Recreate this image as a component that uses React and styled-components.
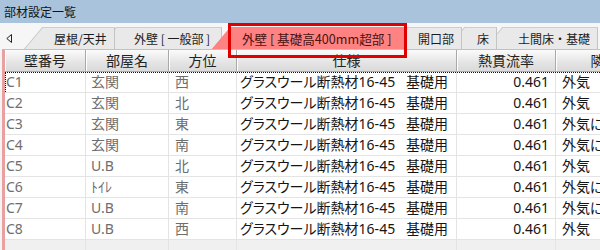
import React from "react";
import styled, { createGlobalStyle } from "styled-components";

const GlobalStyle = createGlobalStyle`
  html, body {
    margin: 0;
    padding: 0;
    background: #f4f4f4;
  }
  body {
    font-family: "Noto Sans", "Noto Sans CJK JP", sans-serif;
  }
`;

const Window = styled.div`
  width: 600px;
  height: 250px;
  overflow: hidden;
  background: #f4f4f4;
  display: flex;
  flex-direction: column;
`;

const TitleBar = styled.div`
  height: 23px;
  flex: none;
  background: #a9c3dd;
  color: #111;
  font-family: "Noto Sans CJK JP", sans-serif;
  font-size: 12px;
  line-height: 23px;
  padding-left: 4px;
`;

const TabStrip = styled.div`
  height: 26px;
  flex: none;
  display: flex;
  align-items: flex-end;
  background: #f6f6f6;
`;

const ScrollArrow = styled.div`
  width: 20px;
  height: 22px;
  display: flex;
  align-items: center;
  padding-left: 6px;
  box-sizing: border-box;
`;

const Tab = styled.div`
  position: relative;
  z-index: ${(p) => (p.$active ? 20 : 10 - p.$index)};
  box-sizing: border-box;
  width: ${(p) => p.$width}px;
  margin-left: ${(p) => p.$offset}px;
  padding-left: ${(p) => p.$pad}px;
  height: 22px;
  display: flex;
  align-items: center;
  white-space: nowrap;
  font-family: "Noto Sans CJK JP", sans-serif;
  font-size: ${(p) => (p.$active ? 12.6 : 12)}px;
  color: ${(p) => (p.$active ? "#4a1212" : "#1c1c1c")};
  background: ${(p) => (p.$active ? "#ff8282" : "#e9e9e9")};
  border-top: 1px solid ${(p) => (p.$active ? "#ff8282" : "#cdcdcd")};
  border-right: 1px solid ${(p) => (p.$active ? "#ff8282" : "#c4c4c4")};

  &::before {
    content: "";
    position: absolute;
    z-index: -1;
    top: -1px;
    bottom: 0;
    left: -19px;
    width: 30px;
    background: ${(p) => (p.$active ? "#ff8282" : "#e9e9e9")};
    border-top: 1px solid ${(p) => (p.$active ? "#ff8282" : "#cdcdcd")};
    border-left: 1px solid ${(p) => (p.$active ? "#ff8282" : "#c4c4c4")};
    transform: skewX(-40deg);
    transform-origin: bottom left;
  }

  ${(p) =>
    p.$active &&
    `
    &::after {
      content: "";
      position: absolute;
      top: -5px;
      bottom: -9px;
      left: -3px;
      right: -4px;
      border: 3px solid #e10000;
      pointer-events: none;
    }
  `}
`;

const Panel = styled.div`
  flex: 1;
  margin-left: 2px;
  border-left: 3px solid #e9a0a0;
  border-top: 1px solid #eab0b0;
  background: #ffffff;
  overflow: hidden;
`;

const COLS = "81px 83px 68px 220px 99px 126px";

const HeaderRow = styled.div`
  display: grid;
  grid-template-columns: ${COLS};
  height: 22px;
`;

const HeaderCell = styled.div`
  box-sizing: border-box;
  height: 22px;
  background: linear-gradient(#fbfbfb, #e4e4e4 60%, #dadada);
  border-right: 1px solid #a9a9a9;
  border-bottom: 1px solid #a9a9a9;
  box-shadow: inset 1px 0 0 #ffffff;
  text-align: center;
  font-family: "Noto Sans CJK JP", sans-serif;
  font-size: 14px;
  line-height: 21px;
  color: #222;
  white-space: nowrap;
  overflow: hidden;
`;

const Row = styled.div`
  position: relative;
  display: grid;
  grid-template-columns: ${COLS};
  height: 21px;
  background: ${(p) => (p.$empty ? "#f0f0f0" : "#ffffff")};

  ${(p) =>
    p.$focused &&
    `
    &::after {
      content: "";
      position: absolute;
      inset: 0 -2px -1px 0;
      border: 1px dotted #111;
      pointer-events: none;
    }
  `}
`;

const Cell = styled.div`
  box-sizing: border-box;
  height: 21px;
  border-right: 1px solid #e4e4e4;
  border-bottom: 1px solid #e4e4e4;
  padding-left: ${(p) => p.$pad || 0}px;
  padding-right: ${(p) => (p.$right ? 6 : 0)}px;
  text-align: ${(p) => (p.$right ? "right" : "left")};
  font-size: 14px;
  line-height: 20px;
  font-feature-settings: "palt";
  color: ${(p) => (p.$muted ? "#6e6e6e" : "#151515")};
  white-space: nowrap;
  overflow: hidden;
`;

const Spec = styled.span`
  display: inline-block;
  width: 166px;
  overflow: hidden;
  vertical-align: top;
`;

const tabs = [
  { label: "屋根/天井", width: 72, offset: 23, pad: 11 },
  { label: "外壁 [ 一般部 ]", width: 105, offset: 2, pad: 17 },
  { label: "外壁 [ 基礎高400mm超部 ]", width: 173, offset: 9, pad: 11, active: true },
  { label: "開口部", width: 54, offset: 4, pad: 10 },
  { label: "床", width: 32, offset: 3, pad: 12 },
  { label: "土間床・基礎", width: 95, offset: 6, pad: 15 },
];

const headers = ["壁番号", "部屋名", "方位", "仕様", "熱貫流率", "隣接空間"];

const rows = [
  ["C1", "玄関", "西", "外気"],
  ["C2", "玄関", "北", "外気"],
  ["C3", "玄関", "東", "外気に通じる床裏"],
  ["C4", "玄関", "南", "外気に通じる床裏"],
  ["C5", "U.B", "北", "外気"],
  ["C6", "ﾄｲﾚ", "東", "外気に通じる床裏"],
  ["C7", "U.B", "南", "外気に通じる床裏"],
  ["C8", "U.B", "西", "外気"],
];

const App = () => (
  <>
    <GlobalStyle />
    <Window>
      <TitleBar>部材設定一覧</TitleBar>
      <TabStrip>
        <ScrollArrow>
          <svg width="6" height="9" viewBox="0 0 6 9">
            <path d="M5.5 0.5 L0.8 4.5 L5.5 8.5 Z" fill="none" stroke="#222" strokeWidth="1" />
          </svg>
        </ScrollArrow>
        {tabs.map((t, i) => (
          <Tab
            key={t.label}
            $index={i}
            $width={t.width}
            $offset={t.offset}
            $pad={t.pad}
            $active={t.active}
          >
            {t.label}
          </Tab>
        ))}
      </TabStrip>
      <Panel>
        <HeaderRow>
          {headers.map((h) => (
            <HeaderCell key={h}>{h}</HeaderCell>
          ))}
        </HeaderRow>
        {rows.map(([no, room, dir, next], i) => (
          <Row key={no} $focused={i === 0}>
            <Cell $muted $pad={1}>{no}</Cell>
            <Cell $muted $pad={5}>{room}</Cell>
            <Cell $muted $pad={6}>{dir}</Cell>
            <Cell $pad={3}>
              <Spec>グラスウール断熱材16-45</Spec>基礎用
            </Cell>
            <Cell $right>0.461</Cell>
            <Cell $pad={6}>{next}</Cell>
          </Row>
        ))}
        <Row $empty>
          {headers.map((h) => (
            <Cell key={h} />
          ))}
        </Row>
      </Panel>
    </Window>
  </>
);

export default App;
